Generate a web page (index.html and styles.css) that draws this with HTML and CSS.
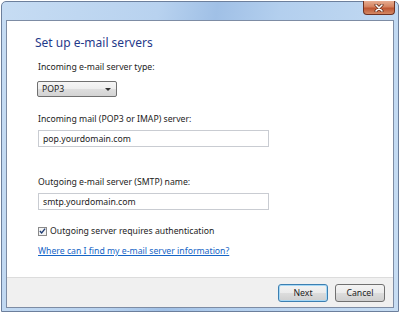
FILE: index.html
```html
<!DOCTYPE html>
<html lang="en">
<head>
    <meta charset="UTF-8" />
    <title>Set up e-mail servers</title>
    <link rel="stylesheet" href="styles.css">
</head>
<body>

<div class="window">
    <div class="titlebar">
        <button class="close-btn">
            <svg width="10" height="8" viewBox="0 0 10 8">
                <path d="M2 1 L8 7 M8 1 L2 7" stroke="#5a2412" stroke-width="3" stroke-linecap="round"/>
                <path d="M2 1 L8 7 M8 1 L2 7" stroke="#fff" stroke-width="1.6" stroke-linecap="round"/>
            </svg>
        </button>
    </div>

    <div class="client">
        <div class="main">
            <h1>Set up e-mail servers</h1>

            <label class="lbl">Incoming e-mail server type:</label>
            <div class="select">
                <span>POP3</span>
                <span class="arrow"></span>
            </div>

            <label class="lbl">Incoming mail (POP3 or IMAP) server:</label>
            <input type="text" value="pop.yourdomain.com">

            <label class="lbl smtp">Outgoing e-mail server (SMTP) name:</label>
            <input type="text" value="smtp.yourdomain.com">

            <div class="check-row">
                <span class="checkbox">
                    <svg width="8" height="8" viewBox="0 0 8 8">
                        <path d="M1 4 L3 6.3 L7 1.2" stroke="#1d3b72" stroke-width="1.5" fill="none"/>
                    </svg>
                </span>
                <span>Outgoing server requires authentication</span>
            </div>

            <a class="help-link" href="#">Where can I find my e-mail server information?</a>
        </div>

        <div class="footer">
            <button class="btn default">Next</button>
            <button class="btn">Cancel</button>
        </div>
    </div>
</div>

</body>
</html>
```

FILE: styles.css
```css
body {
    margin: 0;
    font-family: "Noto Sans", "Open Sans", sans-serif;
    font-size: 8.7px;
    line-height: 12px;
    color: #1c1c1c;
    background: #fff;
}

.window {
    width: 398px;
    height: 311px;
    margin: 1px 0 0 1px;
    box-sizing: border-box;
    border: 1px solid #6c7f9c;
    border-radius: 5px 5px 0 0;
    background: linear-gradient(100deg, #c6dcf3 0%, #b8d2ef 35%, #a0c0e6 48%, #b3cfee 62%, #c7ddf3 100%);
    padding: 0 4px 3px 4px;
    display: flex;
    flex-direction: column;
}

.titlebar {
    height: 18px;
    display: flex;
    justify-content: flex-end;
    align-items: flex-start;
    margin-right: -1px;
}

.close-btn {
    width: 32px;
    height: 14px;
    margin-top: -1px;
    padding: 0;
    border: 1px solid #6e3222;
    border-top: none;
    border-radius: 0 0 4px 4px;
    background: linear-gradient(#e6ad92 0%, #d4825f 45%, #bd5633 55%, #d48863 100%);
    display: flex;
    align-items: center;
    justify-content: center;
}

.client {
    flex: 1;
    border: 1px solid #7d8ca4;
    background: #fff;
    display: flex;
    flex-direction: column;
}

.main {
    flex: 1;
    padding: 14px 0 0 31px;
    display: flex;
    flex-direction: column;
    align-items: flex-start;
}

h1 {
    margin: 0 0 10px -3px;
    font-size: 12px;
    line-height: 16px;
    font-weight: normal;
    color: #1f3a8a;
}

.lbl {
    display: block;
}

.select {
    width: 80px;
    height: 16px;
    box-sizing: border-box;
    margin: 8px 0 16px -1px;
    border: 1px solid #707070;
    border-radius: 2px;
    background: linear-gradient(#f6f6f6 0%, #ededed 50%, #dedede 51%, #d3d3d3 100%);
    display: flex;
    align-items: center;
    justify-content: space-between;
    padding: 0 5px 0 4px;
}

.arrow {
    width: 0;
    height: 0;
    border-left: 3px solid transparent;
    border-right: 3px solid transparent;
    border-top: 3px solid #333;
}

input[type="text"] {
    display: block;
    width: 231px;
    height: 17px;
    box-sizing: border-box;
    margin: 5px 0 0 0;
    border: 1px solid #c9ccd2;
    padding: 0 4px;
    font-family: inherit;
    font-size: 8.7px;
    color: #1c1c1c;
}

.lbl.smtp {
    margin-top: 29px;
}

.check-row {
    display: flex;
    align-items: center;
    gap: 3px;
    margin: 15px 0 8px 0;
}

.checkbox {
    width: 9px;
    height: 9px;
    box-sizing: border-box;
    border: 1px solid #8a8a8a;
    background: #f4f4f4;
    display: flex;
    align-items: center;
    justify-content: center;
}

.help-link {
    color: #1565c6;
}

.footer {
    height: 30px;
    box-sizing: border-box;
    background: #f0f0f0;
    border-top: 1px solid #dcdcdc;
    display: flex;
    justify-content: flex-end;
    align-items: center;
    gap: 7px;
    padding-right: 8px;
}

.btn {
    width: 50px;
    height: 18px;
    padding: 0;
    border: 1px solid #707070;
    border-radius: 3px;
    background: linear-gradient(#f3f3f3 0%, #ebebeb 50%, #dddddd 51%, #cfcfcf 100%);
    font-family: inherit;
    font-size: 8.7px;
    color: #1c1c1c;
}

.btn.default {
    border-color: #3c7fb1;
    box-shadow: inset 0 0 0 1px #a6d8f6;
}
```
